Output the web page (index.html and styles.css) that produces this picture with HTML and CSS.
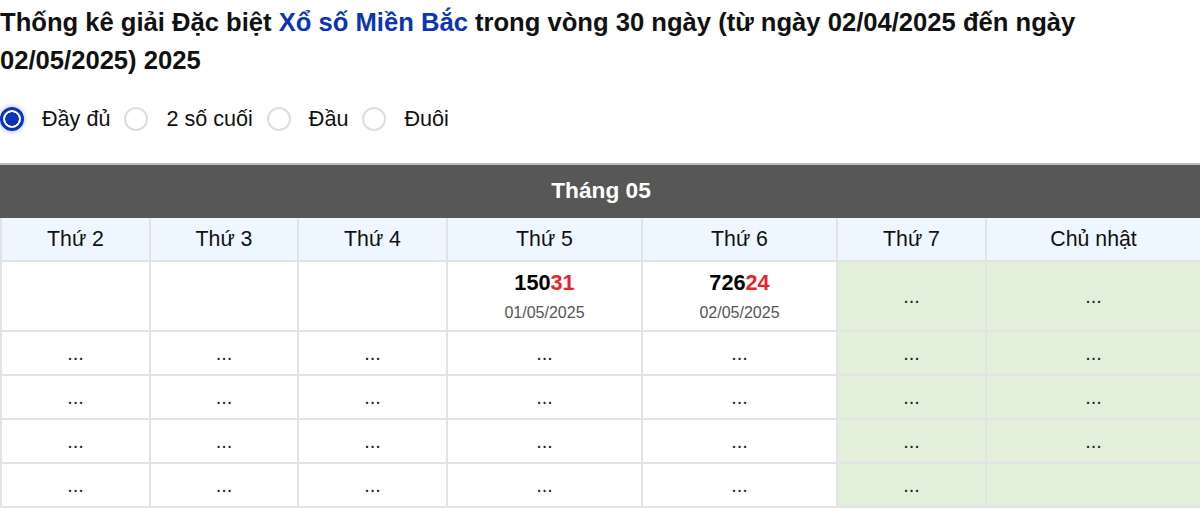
FILE: index.html
```html
<!DOCTYPE html>
<html lang="vi">
<head>
<meta charset="utf-8">
<link rel="stylesheet" href="styles.css">
</head>
<body>
<div class="page">
  <h2 class="title">Thống kê giải Đặc biệt <a class="link" href="#">Xổ số Miền Bắc</a> trong vòng 30 ngày (từ ngày 02/04/2025 đến ngày 02/05/2025) 2025</h2>
  <div class="options">
    <label class="opt"><span class="radio checked"></span><span>Đầy đủ</span></label>
    <label class="opt"><span class="radio"></span><span>2 số cuối</span></label>
    <label class="opt"><span class="radio"></span><span>Đầu</span></label>
    <label class="opt"><span class="radio"></span><span>Đuôi</span></label>
  </div>
  <table class="cal">
    <colgroup>
      <col style="width:149px"><col style="width:148px"><col style="width:149px"><col style="width:195px"><col style="width:195px"><col style="width:149px"><col style="width:215px">
    </colgroup>
    <thead>
      <tr><th colspan="7" class="month">Tháng 05</th></tr>
      <tr class="days"><th>Thứ 2</th><th>Thứ 3</th><th>Thứ 4</th><th>Thứ 5</th><th>Thứ 6</th><th>Thứ 7</th><th>Chủ nhật</th></tr>
    </thead>
    <tbody>
      <tr class="first">
        <td></td><td></td><td></td>
        <td><div class="num">150<span class="red">31</span></div><div class="date">01/05/2025</div></td>
        <td><div class="num">726<span class="red">24</span></div><div class="date">02/05/2025</div></td>
        <td class="wk">...</td><td class="wk">...</td>
      </tr>
      <tr><td>...</td><td>...</td><td>...</td><td>...</td><td>...</td><td class="wk">...</td><td class="wk">...</td></tr>
      <tr><td>...</td><td>...</td><td>...</td><td>...</td><td>...</td><td class="wk">...</td><td class="wk">...</td></tr>
      <tr><td>...</td><td>...</td><td>...</td><td>...</td><td>...</td><td class="wk">...</td><td class="wk">...</td></tr>
      <tr><td>...</td><td>...</td><td>...</td><td>...</td><td>...</td><td class="wk">...</td><td class="wk"></td></tr>
    </tbody>
  </table>
</div>
</body>
</html>
```

FILE: styles.css
```css
html, body {
  margin: 0;
  padding: 0;
  background: #fff;
}
body {
  font-family: "Liberation Sans", Arial, sans-serif;
  color: #000;
}
.page {
  width: 1200px;
}
.title {
  margin: 0;
  padding-top: 3px;
  font-size: 25.6px;
  line-height: 38px;
  font-weight: 700;
  color: #111;
}
.link {
  color: #0a36b4;
  text-decoration: none;
}
.options {
  display: flex;
  align-items: center;
  margin-top: 28px;
  height: 24px;
  gap: 14px;
}
.opt {
  display: flex;
  align-items: center;
  gap: 18px;
  font-size: 21.6px;
  color: #111;
}
.radio {
  width: 24px;
  height: 24px;
  box-sizing: border-box;
  border-radius: 50%;
  border: 2px solid #dedee2;
  background: #fff;
  flex: none;
}
.radio.checked {
  border: 3px solid #0a33b8;
  background: radial-gradient(circle, #0a33b8 0 6.5px, #fff 7px);
  box-shadow: 0 0 4px 1px rgba(60, 100, 230, 0.35);
}
.cal {
  margin-top: 32px;
  width: 1200px;
  table-layout: fixed;
  border-collapse: collapse;
  font-size: 20px;
}
.cal th, .cal td {
  border: 2px solid #e3e3e6;
  text-align: center;
  padding: 0;
}
.cal .month {
  background: #575757;
  color: #fff;
  font-weight: 700;
  font-size: 22.7px;
  height: 51px;
  border-color: #575757;
  border-top-color: #bdbdbd;
}
.days th {
  background: #eef6ff;
  font-weight: 400;
  font-size: 21.3px;
  height: 42px;
  color: #111;
}
.cal td {
  height: 42px;
  font-size: 20px;
  color: #222;
  vertical-align: middle;
}
.first td {
  height: 68px;
}
.cal td.wk {
  background: #e2efda;
}
.num {
  font-weight: 700;
  font-size: 21.7px;
  color: #000;
  line-height: 26px;
}
.red {
  color: #e8232c;
}
.date {
  font-size: 16px;
  color: #555;
  margin-top: 8px;
}
```
